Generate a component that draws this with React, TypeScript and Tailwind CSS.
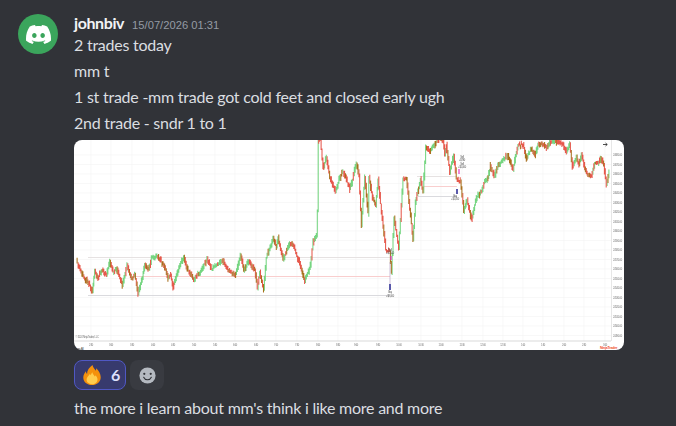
import { SiDiscord } from "react-icons/si";

const z3: [number, number][] = [[20,378],[40,425],[55,440],[68,470],[75,410],[85,428],[95,405],[110,420],[120,380],[130,410],[140,400],[158,450],[172,392],[185,430],[195,420],[205,475],[218,425],[225,390],[238,405],[245,370],[262,360],[285,395],[295,430],[303,420],[310,455],[325,405],[342,365],[350,395],[372,435],[395,405],[412,372],[425,400],[458,378],[475,405],[498,420],[512,360],[522,405],[537,378],[555,405],[563,455],[570,415],[582,462],[590,370],[610,310],[620,335],[625,310],[640,375],[660,325],[670,330],[690,385],[705,440],[722,390],[730,320],[740,300],[744,230],[745,15]];
const z3b: [number, number][] = [[752,15],[760,100],[770,65],[780,125],[797,170],[808,135],[820,110],[838,155]];
const z4: [number, number][] = [[0,165],[20,85],[28,120],[35,270],[45,125],[55,235],[58,125],[68,190],[78,210],[85,135],[95,230],[108,345],[120,350],[125,410],[133,250],[147,335],[160,130],[170,130],[180,220],[190,310],[197,200],[212,135],[220,170],[228,35],[240,50],[265,12],[280,15],[285,60],[290,30],[300,110],[312,60],[320,130],[332,140],[342,230],[352,195],[365,250],[380,190],[395,165],[405,140],[415,130],[422,90],[433,125],[445,90],[460,75],[472,60],[490,100],[505,30],[520,30],[530,70],[545,40],[555,60],[565,30],[580,30],[590,40],[600,25],[615,18],[640,30],[650,50],[660,30],[668,95],[680,65],[688,90],[695,60],[710,115],[725,125],[735,85],[745,85],[752,68],[762,90],[770,150],[778,115]];

// Points in the chart's own coordinates (origin = chart's top-left corner).
const points: [number, number][] = [
  ...z3.map(([x, y]): [number, number] => [x / 3 - 4, y / 3 - 5]),
  ...z3b.map(([x, y]): [number, number] => [x / 3 - 4, y / 3 - 5]),
  ...z4.map(([x, y]): [number, number] => [x / 3 + 276, y / 3 - 5]),
];

function buildCandles() {
  let up = "";
  let down = "";
  let dark = "";
  let seed = 11;
  const rnd = () => {
    seed = (seed * 16807) % 2147483647;
    return seed / 2147483647;
  };
  for (let i = 0; i < points.length - 1; i++) {
    const [x0, y0] = points[i];
    const [x1, y1] = points[i + 1];
    const n = Math.max(1, Math.round((x1 - x0) / 0.9));
    for (let k = 0; k < n; k++) {
      const a = y0 + ((y1 - y0) * k) / n;
      const b = y0 + ((y1 - y0) * (k + 1)) / n;
      const x = (x0 + ((x1 - x0) * (k + 0.5)) / n).toFixed(1);
      const j = (rnd() - 0.5) * 2.6;
      const top = Math.max(0, Math.min(a, b) - 1 - rnd() * 2.2 + j).toFixed(1);
      const bot = (Math.max(a, b) + 1 + rnd() * 2.2 + j).toFixed(1);
      const seg = `M${x} ${top}V${bot}`;
      if (b < a && rnd() < 0.8) up += seg;
      else if (rnd() < 0.32) dark += seg;
      else down += seg;
    }
  }
  return { up, down, dark };
}

const times = [
  [17, "2:30"],[37, "3:00"],[58, "3:30"],[79, "4:00"],[99, "4:30"],[120, "5:00"],[141, "5:30"],[161, "6:00"],[182, "6:30"],[202, "7:00"],[223, "7:30"],[244, "8:00"],[264, "8:30"],[282, "9:00"],[304, "9:30"],[325, "10:00"],[347, "10:30"],[367, "11:00"],[388, "11:30"],[409, "12:00"],[429, "12:30"],[449, "1:00"],[469, "1:30"],[490, "2:00"],[510, "2:30"],[531, "3:00"],
] as [number, string][];

const prices = Array.from({ length: 20 }, (_, i) => 15 + i * 9.5);

function Chart() {
  const { up, down, dark } = buildCandles();
  return (
    <svg viewBox="0 0 550 210" width="550" height="210" className="block" style={{ fontFamily: "Liberation Sans, sans-serif" }}>
      <rect width="550" height="210" fill="#ffffff" />
      <g stroke="#f3f3f3" strokeWidth="0.6">
        {times.map(([x]) => <path key={x} d={`M${x} 0V201`} />)}
        {prices.map((y) => <path key={y} d={`M0 ${y}H537`} />)}
      </g>
      <g fill="none" strokeWidth="0.9">
        <path d="M14 117.500H316M343 36.500H383" stroke="#e3dfdf" />
        <path d="M14 155.500H316M344 56.500H383" stroke="#d6d6da" />
        <path d="M60 136.500H316M350 46.500H383" stroke="#f8c8c8" />
      </g>
      <g fill="none" strokeWidth="1.05" filter="url(#soft)">
        <path d={up} stroke="#74d580" />
        <path d={down} stroke="#e6584c" />
        <path d={dark} stroke="#a8701f" />
      </g>
      <path d="M316 122V144" stroke="#b9a4c9" strokeWidth="0.7" />
      <path d="M317 116v4M385 29v5" stroke="#e23bc8" strokeWidth="1.2" />
      <path d="M316 144v6M383 49v5" stroke="#23238f" strokeWidth="1.5" />
      <g fontSize="2.600" fill="#555555" filter="url(#soft)">
        <text x="316" y="153" textAnchor="middle">Buy</text>
        <text x="316" y="157" textAnchor="middle">+$2,000</text>
        <text x="316" y="111" textAnchor="middle">Sell</text>
        <text x="316" y="114" textAnchor="middle">+$1,500</text>
        <text x="388" y="18" textAnchor="middle">Sell</text>
        <text x="388" y="21" textAnchor="middle">+$790</text>
        <text x="388" y="25" textAnchor="middle">Sell</text>
        <text x="388" y="28" textAnchor="middle">+$1,000</text>
        <text x="381" y="57" textAnchor="middle">Buy</text>
        <text x="381" y="60" textAnchor="middle">+$1,050</text>
      </g>
      <path d="M0 201H537" stroke="#c8c8c8" strokeWidth="0.7" />
      <path d="M537.500 0V201" stroke="#dcdcdc" strokeWidth="0.7" />
      <g fontSize="2.600" fill="#777777" filter="url(#soft)">
        {times.map(([x, t]) => <text key={x} x={x} y="206" textAnchor="middle">{t}</text>)}
        {prices.map((y, i) => <text key={y} x="539" y={y + 1}>{(24680 - i * 10).toFixed(2)}</text>)}
        <text x="1.500" y="198">© 2024 NinjaTrader, LLC</text>
      </g>
      <text x="1.500" y="210" fontSize="3" fill="#444444">Log: All</text>
      <path d="M529 4.500H533M531.500 3L533.300 4.500L531.500 6" fill="none" stroke="#222222" strokeWidth="0.8" />
      <text x="526" y="209" fontSize="3.600" fontWeight="700" fill="#ef5030">NinjaTrader</text>
      <defs>
        <filter id="soft" x="-2%" y="-2%" width="104%" height="104%">
          <feGaussianBlur stdDeviation="0.3" />
        </filter>
      </defs>
    </svg>
  );
}

function Flame() {
  return (
    <svg viewBox="0 0 24 24" width="22" height="22">
      <path d="M12.500 1c.6 3 2.600 4.600 3.600 6.300.4-.9.5-1.800.3-2.800 2.800 2.200 5.100 6.100 5.100 10 0 5.300-4.300 8.500-9.500 8.500S2.500 19.800 2.500 14.800c0-2.900 1.300-5 2.800-7 .1 1.300.5 2.300 1.300 3C6.500 7 9 3.500 12.500 1z" fill="#f4900c" />
      <path d="M12.400 9c.3 2.200 1.800 3 2.700 4.700.4-.4.600-.9.700-1.500 1.300 1.400 2.200 3 2.200 4.600 0 3.200-2.700 5.200-6 5.200s-5.900-2-5.900-5c0-2.800 2.400-4.200 3.700-6.500.3.800.6 1.300 1 1.700.2-1.200.6-2.200 1.600-3.200z" fill="#ffcc4d" />
    </svg>
  );
}

function Smiley() {
  return (
    <svg viewBox="0 0 20 20" width="17" height="17">
      <circle cx="10" cy="10" r="9.500" fill="#b5bac1" />
      <circle cx="6.200" cy="8" r="1.300" fill="#313338" />
      <circle cx="13.800" cy="8" r="1.300" fill="#313338" />
      <path d="M5.500 12c1 2.200 2.700 3 4.500 3s3.500-.8 4.500-3" fill="none" stroke="#313338" strokeWidth="1.300" strokeLinecap="round" />
    </svg>
  );
}

export default function App() {
  return (
    <div className="w-[676px] h-[426px] overflow-hidden bg-[#313338] text-[#dbdee1] text-[16px] leading-[22px] tracking-[-0.24px] font-['Lato',sans-serif] flex gap-4 pl-[18px] pt-[14px]">
      <div className="w-10 h-10 shrink-0 rounded-full bg-[#3ba55c] flex items-center justify-center text-white">
        <SiDiscord size={25} />
      </div>
      <div className="flex flex-col">
        <div className="flex items-baseline gap-2 -mt-[2px] h-[22px]">
          <span className="font-bold tracking-[-0.4px] text-[#f2f3f5]">johnbiv</span>
          <span className="text-[11.2px] tracking-normal font-['Liberation_Sans',sans-serif] text-[#949ba4]">15/07/2026 01:31</span>
        </div>
        <div className="flex flex-col gap-1">
          <div>2 trades today</div>
          <div>mm t</div>
          <div>1 st trade -mm trade got cold feet and closed early ugh</div>
          <div>2nd trade - sndr 1 to 1</div>
        </div>
        <div className="mt-[6px] w-[550px] h-[210px] rounded-lg overflow-hidden">
          <Chart />
        </div>
        <div className="flex gap-1 mt-[10px]">
          <div className="w-[52px] h-[30px] rounded-lg bg-[#373a6d] border border-[#5058c4] flex items-center gap-2 pl-[6px]">
            <Flame />
            <span className="font-bold text-[#dee0fc]">6</span>
          </div>
          <div className="w-[34px] h-[30px] rounded-lg bg-[#393b41] flex items-center justify-center">
            <Smiley />
          </div>
        </div>
        <div className="mt-[7px]">the more i learn about mm's think i like more and more</div>
      </div>
    </div>
  );
}
